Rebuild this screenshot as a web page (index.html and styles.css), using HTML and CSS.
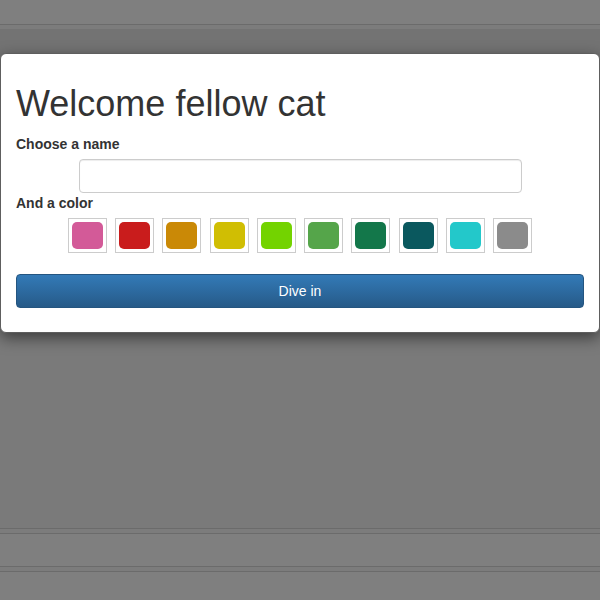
FILE: index.html
```html
<!DOCTYPE html>
<html>
<head>
<meta charset="utf-8">
<link rel="stylesheet" href="styles.css">
</head>
<body>
<div class="page">
  <div class="header"></div>
  <div class="rule"></div>
  <div class="strip"></div>
  <div class="navband"></div>
  <div class="main"></div>
  <div class="rule"></div>
  <div class="strip"></div>
  <div class="rule"></div>
  <div class="footer"></div>
  <div class="rule"></div>
  <div class="strip"></div>
  <div class="rule"></div>
  <div class="tail"></div>
</div>
<div class="modal">
  <h1 class="title">Welcome fellow cat</h1>
  <label class="label">Choose a name</label>
  <div class="field-row"><input class="input" type="text"></div>
  <label class="label">And a color</label>
  <div class="swatches">
    <span class="swatch"><span class="chip pink"></span></span>
    <span class="swatch"><span class="chip red"></span></span>
    <span class="swatch"><span class="chip orange"></span></span>
    <span class="swatch"><span class="chip yellow"></span></span>
    <span class="swatch"><span class="chip lime"></span></span>
    <span class="swatch"><span class="chip green"></span></span>
    <span class="swatch"><span class="chip forest"></span></span>
    <span class="swatch"><span class="chip teal"></span></span>
    <span class="swatch"><span class="chip cyan"></span></span>
    <span class="swatch"><span class="chip gray"></span></span>
  </div>
  <button class="btn">Dive in</button>
</div>
</body>
</html>
```
FILE: styles.css
```css
html, body {
  margin: 0;
  padding: 0;
}
body {
  background: #7f7f7f;
  font-family: "Liberation Sans", Arial, sans-serif;
  font-size: 14px;
  color: #333;
  position: relative;
  width: 600px;
  height: 600px;
  overflow: hidden;
}
.page {
  display: flex;
  flex-direction: column;
}
.header { height: 24px; background: #7f7f7f; }
.rule { height: 1px; background: #6b6b6b; }
.strip { height: 4px; background: #7c7c7c; }
.navband { height: 60px; background: #737373; }
.main { height: 439px; background: #7a7a7a; }
.footer { height: 32px; background: #7f7f7f; }
.tail { height: 28px; background: #7f7f7f; }

.modal {
  position: absolute;
  top: 53px;
  left: 0;
  width: 600px;
  box-sizing: border-box;
  background: #fff;
  border: 1px solid #5e5e5e;
  border-radius: 6px;
  box-shadow: 0 5px 15px rgba(0, 0, 0, 0.5);
  padding: 16px 15px 24px;
  display: flex;
  flex-direction: column;
  align-items: flex-start;
}
.title {
  font-size: 36px;
  font-weight: 400;
  line-height: 1.1;
  margin: 14px 0 10px;
  color: #333;
}
.label {
  display: inline-block;
  font-weight: 700;
  line-height: 20px;
  margin-bottom: 5px;
}
.field-row {
  align-self: stretch;
  display: flex;
  justify-content: center;
}
.input {
  width: 443px;
  height: 34px;
  box-sizing: border-box;
  border: 1px solid #ccc;
  border-radius: 4px;
  box-shadow: inset 0 1px 1px rgba(0, 0, 0, 0.075);
  padding: 6px 12px;
  margin: 0;
  font: inherit;
}
.swatches {
  align-self: stretch;
  display: flex;
  justify-content: center;
  gap: 8.3px;
}
.swatch {
  width: 39px;
  height: 35px;
  box-sizing: border-box;
  border: 1px solid #ccc;
  padding: 3px;
  display: flex;
}
.chip {
  flex: 1;
  border-radius: 5px;
}
.pink { background: #d35a98; }
.red { background: #c91c1c; }
.orange { background: #ca8906; }
.yellow { background: #d0be03; }
.lime { background: #73d300; }
.green { background: #55a54a; }
.forest { background: #13774a; }
.teal { background: #0a585e; }
.cyan { background: #23c8ca; }
.gray { background: #8b8b8b; }

.btn {
  align-self: stretch;
  margin-top: 21px;
  height: 34px;
  box-sizing: border-box;
  border: 1px solid #245580;
  border-radius: 4px;
  background: linear-gradient(to bottom, #337ab7 0%, #265a88 100%);
  color: #fff;
  font: inherit;
  font-size: 14px;
  line-height: 20px;
  padding: 6px 12px;
  text-align: center;
}
```
